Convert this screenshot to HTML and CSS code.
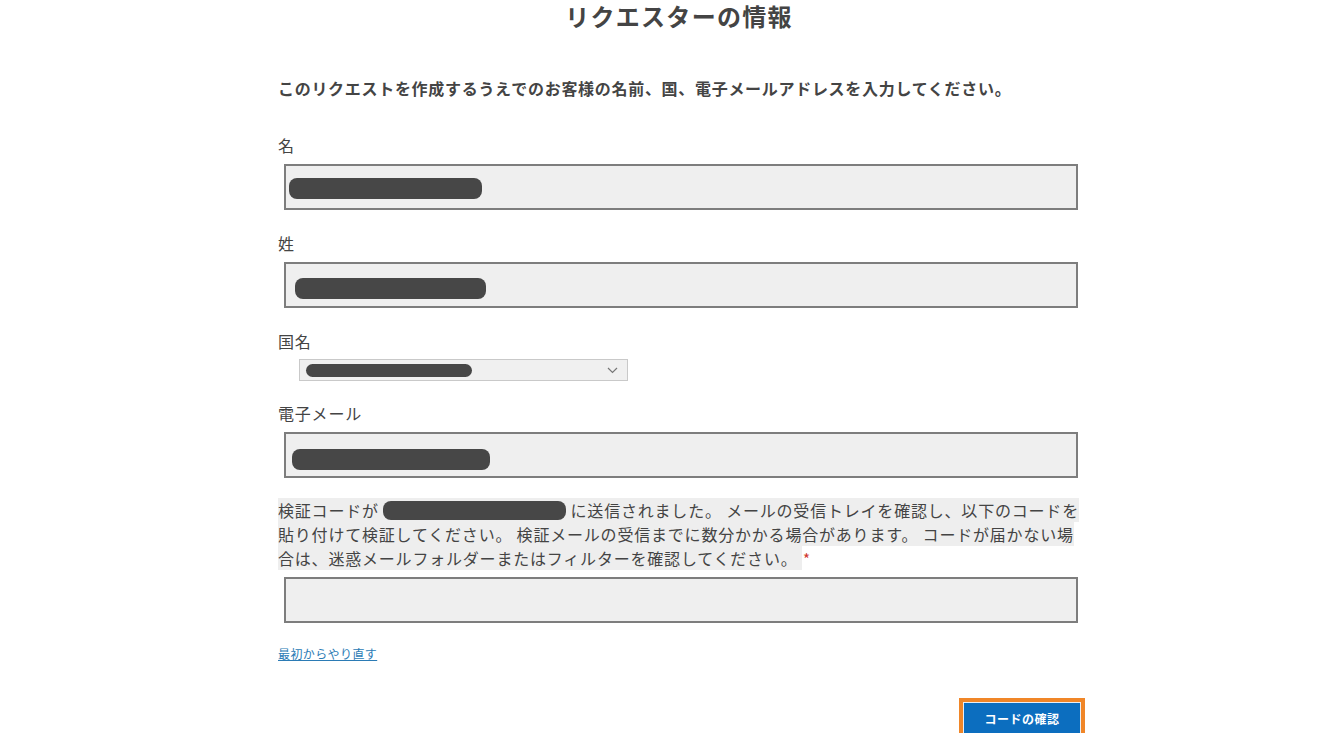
FILE: index.html
```html
<!DOCTYPE html>
<html lang="ja">
<head>
<meta charset="utf-8">
<title>リクエスターの情報</title>
<link rel="stylesheet" href="styles.css">
</head>
<body>
<main class="page">
  <h1 class="title">リクエスターの情報</h1>
  <p class="intro">このリクエストを作成するうえでのお客様の名前、国、電子メールアドレスを入力してください。</p>

  <div class="field">
    <div class="label">名</div>
    <div class="box"><span class="redact r1"></span></div>
  </div>

  <div class="field">
    <div class="label">姓</div>
    <div class="box"><span class="redact r2"></span></div>
  </div>

  <div class="field field-select">
    <div class="label label-select">国名</div>
    <div class="select">
      <span class="redact r-sel"></span>
      <svg class="chev" width="11" height="7" viewBox="0 0 11 7"><path d="M1 1 L5.5 5.5 L10 1" fill="none" stroke="#777" stroke-width="1.2"/></svg>
    </div>
  </div>

  <div class="field">
    <div class="label">電子メール</div>
    <div class="box"><span class="redact r3"></span></div>
  </div>

  <p class="notice"><span class="hl">検証コードが <span class="redact-inline"></span> に送信されました。 メールの受信トレイを確認し、以下のコードを貼り付けて検証してください。 検証メールの受信までに数分かかる場合があります。 コードが届かない場合は、迷惑メールフォルダーまたはフィルターを確認してください。 </span> <span class="req">*</span></p>

  <div class="box code-box"></div>

  <a class="restart" href="#">最初からやり直す</a>

  <div class="actions">
    <button class="btn" type="button">コードの確認</button>
  </div>
</main>
</body>
</html>
```

FILE: styles.css
```css
html, body {
  margin: 0;
  padding: 0;
  background: #ffffff;
}

body {
  font-family: "Noto Sans CJK JP", "Noto Sans", sans-serif;
  color: #444444;
}

.page {
  width: 802px;
  margin-left: 278px;
}

.title {
  margin: 0;
  font-size: 24px;
  line-height: 32px;
  font-weight: 700;
  letter-spacing: 1.3px;
  text-align: center;
  color: #444444;
}

.intro {
  margin: 44px 0 0 0;
  font-size: 16px;
  line-height: 24px;
  font-weight: 700;
  letter-spacing: 0.7px;
}

.field {
  margin-top: 33px;
}

.field + .field {
  margin-top: 21px;
}

.field-select + .field {
  margin-top: 20px;
}

.label {
  font-size: 16px;
  line-height: 24px;
  letter-spacing: 0.8px;
}

.box {
  box-sizing: border-box;
  margin: 7px 0 0 6px;
  width: 794px;
  height: 46px;
  border: 2px solid #7d7d7d;
  background: #efefef;
  display: flex;
  align-items: center;
  padding-left: 3px;
}

.redact {
  display: block;
  height: 21px;
  border-radius: 8px;
  background: #474747;
}

.r1 { width: 193px; margin-top: 2px; }
.r2 { width: 191px; margin-left: 6px; margin-top: 6px; }
.r3 { width: 198px; margin-left: 3px; margin-top: 8px; }

.select {
  box-sizing: border-box;
  margin: 6px 0 0 21px;
  width: 329px;
  height: 22px;
  border: 1px solid #c9c9c9;
  background: #f0f0f0;
  display: flex;
  align-items: center;
  justify-content: space-between;
  padding: 0 9px 0 6px;
}

.r-sel {
  width: 166px;
  height: 13px;
  border-radius: 7px;
}

.chev {
  display: block;
  margin-top: 1px;
}

.notice {
  margin: 20px 0 0 0;
  font-size: 16px;
  line-height: 24px;
  letter-spacing: 0.8px;
  width: 802px;
}

.hl {
  background: #eeeeee;
}

.redact-inline {
  display: inline-block;
  width: 183px;
  height: 19px;
  border-radius: 8px;
  background: #474747;
  vertical-align: -3px;
}

.req {
  color: #d0362c;
  font-size: 15px;
  line-height: 0;
  margin-left: 1px;
}

.code-box {
  margin-top: 7px;
}

.restart {
  display: inline-block;
  margin-top: 21px;
  font-size: 12px;
  line-height: 20px;
  letter-spacing: 0.4px;
  color: #2b7bb5;
  text-decoration: underline;
}

.actions {
  display: flex;
  justify-content: flex-end;
  margin-top: 34px;
  padding-top: 5px;
}

.btn {
  width: 116px;
  height: 30px;
  border: none;
  background: #0c6ebf;
  color: #ffffff;
  font-family: "Noto Sans CJK JP", "Noto Sans", sans-serif;
  font-size: 12px;
  font-weight: 700;
  letter-spacing: 0.5px;
  box-shadow: 0 0 0 1px #e9eef5, 0 0 0 5px #f08628;
  cursor: pointer;
  padding: 0;
}
```
